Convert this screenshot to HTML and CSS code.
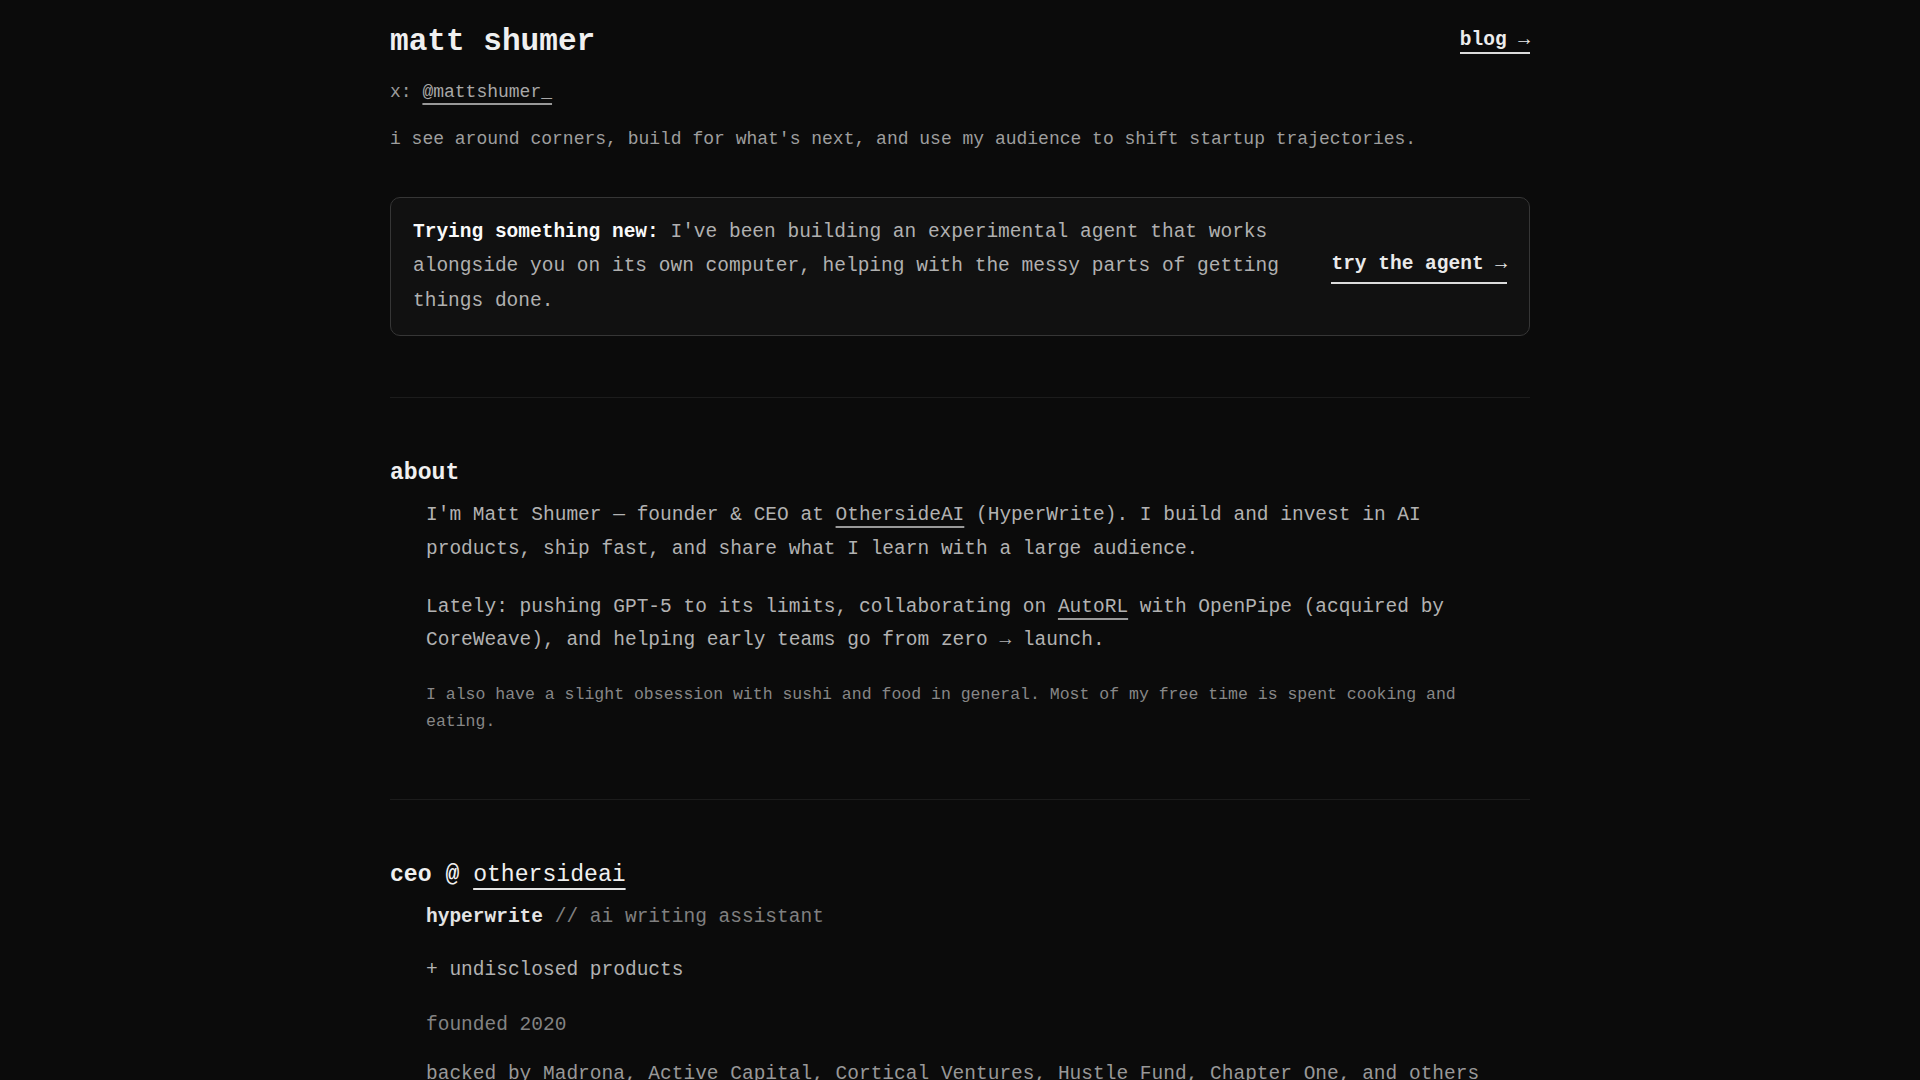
FILE: index.html
```html
<!DOCTYPE html>
<html lang="en">
<head>
<meta charset="utf-8">
<title>matt shumer</title>
<link rel="stylesheet" href="styles.css">
</head>
<body>
<main class="page">
  <header class="top">
    <div class="intro">
      <h1 class="name">matt shumer</h1>
      <p class="handle">x: <a class="handle-link" href="#">@mattshumer_</a></p>
      <p class="tagline">i see around corners, build for what's next, and use my audience to shift startup trajectories.</p>
    </div>
    <a class="blog-link" href="#">blog →</a>
  </header>

  <div class="callout">
    <p class="callout-text"><strong>Trying something new:</strong> I've been building an experimental agent that works alongside you on its own computer, helping with the messy parts of getting things done.</p>
    <a class="callout-link" href="#">try the agent →</a>
  </div>

  <hr class="rule">

  <section class="block">
    <h2 class="block-title">about</h2>
    <div class="block-body">
      <p class="para">I'm Matt Shumer — founder &amp; CEO at <a class="inline-link" href="#">OthersideAI</a> (HyperWrite). I build and invest in AI products, ship fast, and share what I learn with a large audience.</p>
      <p class="para">Lately: pushing GPT-5 to its limits, collaborating on <a class="inline-link" href="#">AutoRL</a> with OpenPipe (acquired by CoreWeave), and helping early teams go from zero → launch.</p>
      <p class="para small">I also have a slight obsession with sushi and food in general. Most of my free time is spent cooking and eating.</p>
    </div>
  </section>

  <hr class="rule rule-wide">

  <section class="block block-role">
    <h2 class="block-title">ceo @ <a class="title-link" href="#">othersideai</a></h2>
    <div class="block-body">
      <p class="item"><span class="item-name">hyperwrite</span> <span class="item-note">// ai writing assistant</span></p>
      <p class="item extra">+ undisclosed products</p>
      <p class="item meta">founded 2020</p>
      <p class="item backers">backed by Madrona, Active Capital, Cortical Ventures, Hustle Fund, Chapter One, and others</p>
    </div>
  </section>
</main>
</body>
</html>
```

FILE: styles.css
```css
* {
  box-sizing: border-box;
}

html,
body {
  margin: 0;
  padding: 0;
  background: #0b0b0b;
}

body {
  font-family: "Liberation Mono", "Courier New", monospace;
  color: #b2b2b2;
  font-size: 19.5px;
  line-height: 1.7;
}

a {
  color: inherit;
}

p {
  margin: 0;
}

.page {
  max-width: 1140px;
  margin: 0 auto;
  padding-top: 23px;
}

/* header */
.top {
  display: flex;
  justify-content: space-between;
  align-items: flex-start;
}

.name {
  margin: 0;
  font-size: 31.1px;
  line-height: 38px;
  font-weight: 700;
  color: #f0f0f0;
}

.handle {
  margin-top: 18px;
  font-size: 18px;
  line-height: 27px;
  color: #9c9c9c;
}

.handle-link {
  color: #a8a8a8;
  text-decoration: underline;
  text-decoration-thickness: 2px;
  text-underline-offset: 6px;
  text-decoration-color: #999999;
}

.tagline {
  margin-top: 20px;
  font-size: 18px;
  line-height: 27px;
  color: #9e9e9e;
}

.blog-link {
  margin-top: 5px;
  font-size: 19.5px;
  line-height: 24px;
  font-weight: 700;
  color: #ececec;
  text-decoration: none;
  border-bottom: 2px solid #dcdcdc;
}

/* callout card */
.callout {
  margin-top: 44px;
  display: flex;
  align-items: center;
  gap: 40px;
  padding: 17px 22px;
  background: #111111;
  border: 1px solid #363636;
  border-radius: 10px;
}

.callout-text {
  flex: 1;
  line-height: 34.3px;
  color: #b0b0b0;
}

.callout-text strong {
  color: #fafafa;
  font-weight: 700;
}

.callout-link {
  flex: none;
  font-weight: 700;
  color: #eaeaea;
  text-decoration: none;
  line-height: 30px;
  padding-bottom: 3px;
  border-bottom: 2px solid #dcdcdc;
}

/* sections */
.rule {
  margin: 61px 0 0;
  border: 0;
  height: 1px;
  background: #1c1c1c;
}

.rule-wide {
  margin-top: 64.5px;
}

.block {
  padding-top: 60.5px;
}

.block-role {
  padding-top: 59.5px;
}

.block-title {
  margin: 0;
  font-size: 23.1px;
  line-height: 31px;
  font-weight: 700;
  color: #f0f0f0;
}

.title-link {
  font-weight: 400;
  color: #f0f0f0;
  text-decoration: underline;
  text-decoration-thickness: 2px;
  text-underline-offset: 7px;
  text-decoration-color: #e4e4e4;
}

.block-body {
  margin-top: 10px;
  padding-left: 36px;
}

.para {
  line-height: 33.6px;
}

.para + .para {
  margin-top: 24px;
}

.para.small {
  font-size: 16.5px;
  line-height: 27px;
  color: #878787;
  margin-top: 23px;
}

.inline-link {
  text-decoration: underline;
  text-decoration-thickness: 2px;
  text-underline-offset: 6px;
  text-decoration-color: #999999;
}

.item {
  line-height: 33.6px;
}

.item-name {
  font-weight: 700;
  color: #e4e4e4;
}

.item-note {
  color: #808080;
}

.extra {
  margin-top: 20px;
  color: #b2b2b2;
}

.meta {
  margin-top: 21px;
  color: #838383;
}

.backers {
  margin-top: 15px;
  color: #989898;
}
```
